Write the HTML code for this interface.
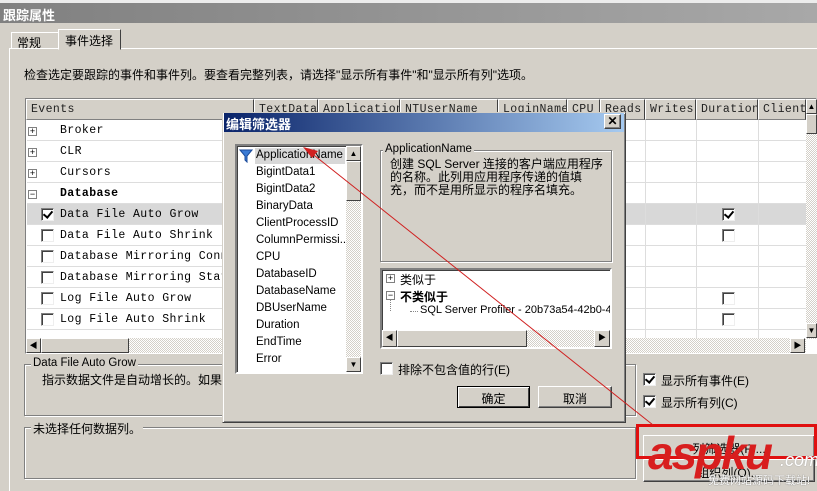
<!DOCTYPE html>
<html><head><meta charset="utf-8"><style>
*{box-sizing:border-box;margin:0;padding:0}
body{width:817px;height:491px;overflow:hidden;background:#d4d0c8;position:relative;font-family:"Liberation Sans","Noto Sans CJK SC",sans-serif;font-size:12px;color:#000}
.a{position:absolute;white-space:nowrap}
.mono{font-family:"Liberation Mono","Noto Sans CJK SC",monospace;font-size:11.5px;letter-spacing:0.4px}
.cb{position:absolute;width:13px;height:13px;background:#fff;border:1px solid #808080;border-right-color:#eee;border-bottom-color:#eee;box-shadow:inset 1px 1px 0 #404040}
.ck::after{content:"";position:absolute;left:3px;top:0px;width:4px;height:7px;border:solid #000;border-width:0 2px 2px 0;transform:rotate(40deg)}
.btn{position:absolute;background:#d4d0c8;border:1px solid;border-color:#fff #404040 #404040 #fff;box-shadow:inset -1px -1px 0 #808080;text-align:center;white-space:nowrap}
.grp{position:absolute;border:1px solid #808080;box-shadow:1px 1px 0 #fff,inset 1px 1px 0 #fff}
.gl{position:absolute;background:#d4d0c8;padding:0 2px;top:-8px;left:6px;white-space:nowrap}
.hc{position:absolute;top:99px;height:21px;border:1px solid;border-color:#fff #404040 #808080 #fff;background:#d4d0c8;padding:3px 0 0 4px;white-space:nowrap;overflow:hidden;color:#222}
.row{position:absolute;left:27px;width:779px;height:21px;border-bottom:1px solid #ddd;background:#fff}
.vl{position:absolute;width:1px;background:#ddd;top:120px;height:218px}
.li{position:absolute;left:256px;font-size:11.5px;white-space:nowrap}
.pm{position:absolute;width:9px;height:9px;border:1px solid #808080;background:#fff;font-size:9px;line-height:7px;text-align:center}
.sb{position:absolute;background:repeating-conic-gradient(#fff 0 25%,#d4d0c8 0 50%) 0 0/2px 2px}
.sbb{position:absolute;background:#d4d0c8;border:1px solid;border-color:#fff #404040 #404040 #fff;font-size:8px;text-align:center;line-height:13px}
</style></head><body>
<div class="a" style="left:0;top:0;width:817px;height:3px;background:#ececec"></div>
<div class="a" style="left:0;top:3px;width:817px;height:20px;background:linear-gradient(90deg,#808080,#a8a8a8);color:#fff;font-weight:bold;font-size:13px;padding:2px 3px">跟踪属性</div>
<div class="a" style="left:9px;top:48px;width:808px;height:443px;border-left:1px solid #fff;border-top:1px solid #fff"></div>
<div class="a" style="left:11px;top:32px;width:48px;height:17px;border:1px solid;border-color:#fff #808080 transparent #fff;padding:1px 5px;font-size:12px">常规</div>
<div class="a" style="left:58px;top:29px;width:63px;height:21px;border:1px solid;border-color:#fff #404040 #d4d0c8 #fff;background:#d4d0c8;padding:2px 6px;font-size:12px">事件选择</div>
<div class="a" style="left:24px;top:66px;font-size:12px">检查选定要跟踪的事件和事件列。要查看完整列表，请选择"显示所有事件"和"显示所有列"选项。</div>
<div class="a" style="left:25px;top:98px;width:792px;height:256px;border:1px solid;border-color:#808080 #fff #fff #808080;background:#fff"></div>
<div class="hc mono" style="left:26px;width:228px">Events</div>
<div class="hc mono" style="left:254px;width:64px">TextData</div>
<div class="hc mono" style="left:318px;width:82px">ApplicationName</div>
<div class="hc mono" style="left:400px;width:98px">NTUserName</div>
<div class="hc mono" style="left:498px;width:69px">LoginName</div>
<div class="hc mono" style="left:567px;width:33px">CPU</div>
<div class="hc mono" style="left:600px;width:45px">Reads</div>
<div class="hc mono" style="left:645px;width:51px">Writes</div>
<div class="hc mono" style="left:696px;width:62px">Duration</div>
<div class="hc mono" style="left:758px;width:48px">ClientP</div>
<div class="row" style="top:120px"></div><div class="row" style="top:141px"></div><div class="row" style="top:162px"></div><div class="row" style="top:183px"></div>
<div class="row" style="top:204px;background:#d8d8d8"></div><div class="row" style="top:225px"></div><div class="row" style="top:246px"></div><div class="row" style="top:267px"></div><div class="row" style="top:288px"></div><div class="row" style="top:309px"></div>
<div class="vl" style="left:645px"></div><div class="vl" style="left:696px"></div><div class="vl" style="left:758px"></div>
<div class="pm" style="left:28px;top:127px">+</div><div class="pm" style="left:28px;top:148px">+</div><div class="pm" style="left:28px;top:169px">+</div><div class="pm" style="left:28px;top:190px">−</div>
<div class="a mono" style="left:60px;top:124px">Broker</div>
<div class="a mono" style="left:60px;top:145px">CLR</div>
<div class="a mono" style="left:60px;top:166px">Cursors</div>
<div class="a mono" style="left:60px;top:187px;font-weight:bold">Database</div>
<div class="a mono" style="left:60px;top:208px">Data File Auto Grow</div>
<div class="a mono" style="left:60px;top:229px">Data File Auto Shrink</div>
<div class="a mono" style="left:60px;top:250px">Database Mirroring Connecti</div>
<div class="a mono" style="left:60px;top:271px">Database Mirroring State Ch</div>
<div class="a mono" style="left:60px;top:292px">Log File Auto Grow</div>
<div class="a mono" style="left:60px;top:313px">Log File Auto Shrink</div>
<div class="cb ck" style="left:41px;top:208px"></div>
<div class="cb" style="left:41px;top:229px"></div><div class="cb" style="left:41px;top:250px"></div><div class="cb" style="left:41px;top:271px"></div><div class="cb" style="left:41px;top:292px"></div><div class="cb" style="left:41px;top:313px"></div>
<div class="cb ck" style="left:722px;top:208px"></div><div class="cb" style="left:722px;top:229px"></div><div class="cb" style="left:722px;top:292px"></div><div class="cb" style="left:722px;top:313px"></div>
<div class="sb" style="left:26px;top:338px;width:780px;height:15px"></div>
<div class="sbb" style="left:26px;top:338px;width:15px;height:15px">◀</div>
<div class="sbb" style="left:41px;top:338px;width:88px;height:15px"></div>
<div class="sbb" style="left:790px;top:338px;width:15px;height:15px">▶</div>
<div class="sb" style="left:806px;top:99px;width:11px;height:240px"></div>
<div class="sbb" style="left:806px;top:99px;width:11px;height:15px">▲</div>
<div class="sbb" style="left:806px;top:114px;width:11px;height:20px"></div>
<div class="sbb" style="left:806px;top:323px;width:11px;height:15px">▼</div>
<div class="grp" style="left:24px;top:364px;width:612px;height:52px"><span class="gl" style="font-size:11.5px">Data File Auto Grow</span></div>
<div class="a" style="left:42px;top:371px">指示数据文件是自动增长的。如果</div>
<div class="grp" style="left:24px;top:427px;width:612px;height:52px"><span class="gl">未选择任何数据列。</span></div>
<div class="cb ck" style="left:643px;top:373px"></div><div class="a" style="left:661px;top:372px">显示所有事件(E)</div>
<div class="cb ck" style="left:643px;top:395px"></div><div class="a" style="left:661px;top:394px">显示所有列(C)</div>
<div class="btn" style="left:643px;top:435px;width:172px;height:23px;padding-top:4px">列筛选器(F)...</div>
<div class="btn" style="left:643px;top:459px;width:172px;height:23px;padding-top:4px">组织列(O)...</div>
<div class="a" style="left:636px;top:424px;width:181px;height:35px;border:3px solid #e01010"></div>
<div class="a" style="left:222px;top:112px;width:404px;height:311px;background:#d4d0c8;border:1px solid;border-color:#d4d0c8 #404040 #404040 #d4d0c8;box-shadow:inset 1px 1px 0 #fff,inset -1px -1px 0 #808080"></div>
<div class="a" style="left:224px;top:113px;width:400px;height:19px;background:linear-gradient(90deg,#0a246a,#a6caf0);color:#fff;font-weight:bold;font-size:13px;padding:1px 2px">编辑筛选器</div>
<div class="btn" style="left:604px;top:114px;width:17px;height:15px;font-size:12px;line-height:12px;font-weight:bold">✕</div>
<div class="a" style="left:235px;top:144px;width:128px;height:230px;background:#fff;border:2px solid;border-color:#808080 #fff #fff #808080;box-shadow:inset 1px 1px 0 #404040"></div>
<div class="a" style="left:255px;top:148px;width:90px;height:16px;background:#d8d8d8"></div>
<svg class="a" style="left:239px;top:149px" width="14" height="14"><path d="M1 1H13L8 7V13L6 11V7Z" fill="#3a7bd5" stroke="#1a4a9a"/></svg>
<div class="li" style="top:149px">ApplicationName</div>
<div class="li" style="top:166px">BigintData1</div>
<div class="li" style="top:183px">BigintData2</div>
<div class="li" style="top:200px">BinaryData</div>
<div class="li" style="top:217px">ClientProcessID</div>
<div class="li" style="top:234px">ColumnPermissi...</div>
<div class="li" style="top:251px">CPU</div>
<div class="li" style="top:268px">DatabaseID</div>
<div class="li" style="top:285px">DatabaseName</div>
<div class="li" style="top:302px">DBUserName</div>
<div class="li" style="top:319px">Duration</div>
<div class="li" style="top:336px">EndTime</div>
<div class="li" style="top:353px">Error</div>
<div class="sb" style="left:346px;top:146px;width:15px;height:226px"></div>
<div class="sbb" style="left:346px;top:146px;width:15px;height:15px">▲</div>
<div class="sbb" style="left:346px;top:161px;width:15px;height:40px"></div>
<div class="sbb" style="left:346px;top:357px;width:15px;height:15px">▼</div>
<div class="grp" style="left:380px;top:150px;width:232px;height:112px"><span class="gl" style="font-size:11.5px;left:2px">ApplicationName</span></div>
<div class="a" style="left:390px;top:158px;font-size:12px;line-height:13px;width:222px">创建 SQL Server 连接的客户端应用程序<br>的名称。此列用应用程序传递的值填<br>充，而不是用所显示的程序名填充。</div>
<div class="a" style="left:380px;top:268px;width:232px;height:81px;background:#fff;border:2px solid;border-color:#808080 #fff #fff #808080;box-shadow:inset 1px 1px 0 #404040"></div>
<div class="pm" style="left:386px;top:274px">+</div><div class="a" style="left:400px;top:271px">类似于</div>
<div class="pm" style="left:386px;top:291px">−</div><div class="a" style="left:400px;top:288px;font-weight:bold">不类似于</div>
<div class="a" style="left:390px;top:300px;width:1px;height:11px;border-left:1px dotted #888"></div>
<div class="a" style="left:410px;top:311px;width:8px;border-top:1px dotted #888"></div>
<div class="a" style="left:420px;top:304px;font-size:11px;width:190px;overflow:hidden">SQL Server Profiler - 20b73a54-42b0-43</div>
<div class="sb" style="left:382px;top:330px;width:228px;height:17px"></div>
<div class="sbb" style="left:382px;top:330px;width:15px;height:17px">◀</div>
<div class="sbb" style="left:397px;top:330px;width:130px;height:17px"></div>
<div class="sbb" style="left:594px;top:330px;width:16px;height:17px">▶</div>
<div class="cb" style="left:380px;top:362px"></div><div class="a" style="left:398px;top:361px">排除不包含值的行(E)</div>
<div class="btn" style="left:457px;top:386px;width:73px;height:22px;padding-top:3px;border:1px solid #000;box-shadow:inset 1px 1px 0 #fff,inset -1px -1px 0 #404040">确定</div>
<div class="btn" style="left:538px;top:386px;width:74px;height:22px;padding-top:3px">取消</div>
<svg class="a" style="left:0;top:0" width="817" height="491"><line x1="653" y1="425" x2="305" y2="148" stroke="#d02020" stroke-width="1"/><path d="M303 147L318 151L312 158Z" fill="#d02020"/></svg>
<div class="a" style="left:648px;top:426px;font:italic bold 46px 'Liberation Sans',sans-serif;color:#d81e1e;letter-spacing:-2px">aspku</div>
<div class="a" style="left:780px;top:450px;font:italic 18px 'Liberation Sans',sans-serif;color:#fff;text-shadow:0 0 1px #888">.com</div>
<div class="a" style="left:708px;top:472px;font-size:11px;color:#fff;text-shadow:0 0 1px #555">免费网站源码下载站!</div>
</body></html>
